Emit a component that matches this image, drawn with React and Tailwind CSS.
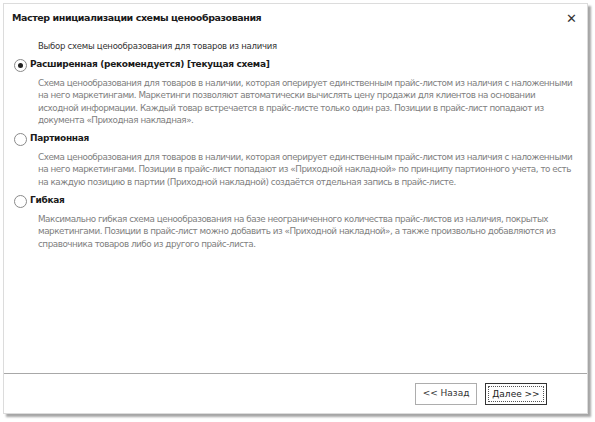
import React, { useState } from 'react';

const schemes = [
    {
        id: 'ext',
        title: 'Расширенная (рекомендуется) [текущая схема]',
        lines: [
            'Схема ценообразования для товаров в наличии, которая оперирует единственным прайс-листом из наличия с наложенными',
            'на него маркетингами. Маркетинги позволяют автоматически вычислять цену продажи для клиентов на основании',
            'исходной информации. Каждый товар встречается в прайс-листе только один раз. Позиции в прайс-лист попадают из',
            'документа «Приходная накладная».',
        ],
    },
    {
        id: 'batch',
        title: 'Партионная',
        lines: [
            'Схема ценообразования для товаров в наличии, которая оперирует единственным прайс-листом из наличия с наложенными',
            'на него маркетингами. Позиции в прайс-лист попадают из «Приходной накладной» по принципу партионного учета, то есть',
            'на каждую позицию в партии (Приходной накладной) создаётся отдельная запись в прайс-листе.',
        ],
    },
    {
        id: 'flex',
        title: 'Гибкая',
        lines: [
            'Максимально гибкая схема ценообразования на базе неограниченного количества прайс-листов из наличия, покрытых',
            'маркетингами. Позиции в прайс-лист можно добавить из «Приходной накладной», а также произвольно добавляются из',
            'справочника товаров либо из другого прайс-листа.',
        ],
    },
];

const Radio = ({ checked }) => (
    <span className="w-[13px] h-[13px] rounded-full border border-[#8a8a8a] bg-white flex items-center justify-center shrink-0">
        {checked && <span className="w-[5px] h-[5px] rounded-full bg-[#222]" />}
    </span>
);

const App = () => {
    const [selected, setSelected] = useState('ext');

    return (
        <div className="w-[595px] h-[422px] bg-white pt-[3px] pl-[3px]" style={{ fontFamily: '"DejaVu Sans", Tahoma, sans-serif' }}>
            <div className="w-[585px] h-[411px] border border-[#dcdcdc] bg-white flex flex-col shadow-[3px_3px_2px_rgba(0,0,0,0.35)]">
                <div className="h-[28px] flex items-center justify-between pl-[8px] pr-[10px]">
                    <span className="text-[9.5px] font-bold text-[#1a1a1a] tracking-[-0.43px]">Мастер инициализации схемы ценообразования</span>
                    <span className="text-[13px] leading-none text-[#333] font-bold">✕</span>
                </div>
                <div className="flex-1 flex flex-col">
                    <div className="pl-[34px] pt-[8px] text-[8.5px] text-[#333] h-[24px] tracking-[-0.25px]">
                        Выбор схемы ценообразования для товаров из наличия
                    </div>
                    {schemes.map(s => (
                        <div key={s.id} className="flex flex-col">
                            <button
                                className="flex items-center gap-[3px] pl-[10px] h-[18px] text-left"
                                onClick={() => setSelected(s.id)}
                            >
                                <Radio checked={selected === s.id} />
                                <span className="text-[9px] font-bold text-[#1a1a1a] tracking-[-0.3px]">{s.title}</span>
                            </button>
                            <div className="pl-[34px] pt-[3px] pb-[4px] text-[8.8px] leading-[12.3px] text-[#808080] tracking-[-0.47px]">
                                {s.lines.map((l, i) => (
                                    <div key={i} className="whitespace-nowrap">{l}</div>
                                ))}
                            </div>
                        </div>
                    ))}
                </div>
                <div className="border-t border-[#a8a8a8] h-[40px] flex items-center justify-end gap-[8px] pr-[40px]">
                    <button className="w-[62px] h-[22px] border border-[#adadad] bg-white text-[9px] text-[#333]">&lt;&lt; Назад</button>
                    <button className="w-[62px] h-[22px] border border-[#333] bg-white text-[9px] text-[#222] p-[2px]">
                        <span className="block w-full h-full border border-dotted border-[#555] leading-[14px]">Далее &gt;&gt;</span>
                    </button>
                </div>
            </div>
        </div>
    );
};

export default App;
